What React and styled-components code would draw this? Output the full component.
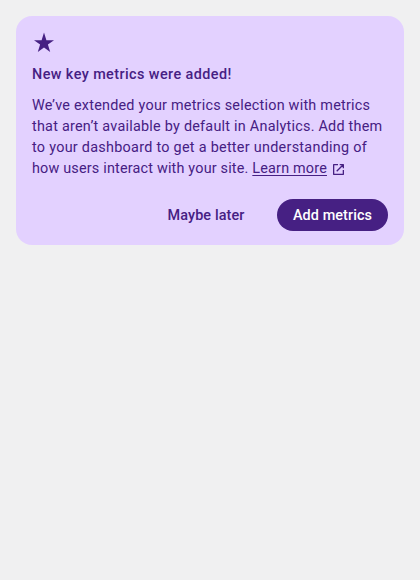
import React from "react";
import styled, { createGlobalStyle } from "styled-components";

const GlobalStyle = createGlobalStyle`
  * { box-sizing: border-box; }
  body {
    margin: 0;
    min-height: 100vh;
    background: #f0f0f1;
    font-family: Roboto, "Liberation Sans", sans-serif;
  }
`;

const Page = styled.main`
  padding: 16px;
`;

const Card = styled.section`
  height: 229px;
  padding: 16px;
  border-radius: 16px;
  background: #e3d1ff;
  color: #462083;
`;

const StarIcon = styled.svg`
  display: block;
  width: 24px;
  height: 22px;
`;

const Title = styled.h3`
  margin: 11px 0 0;
  font-size: 14.4px;
  line-height: 20px;
  font-weight: 500;
  letter-spacing: ${(p) => p.$tracking}px;
`;

const Description = styled.p`
  margin: 10px 0 0;
  font-size: 14.4px;
  line-height: 21px;
`;

const Line = styled.span`
  display: block;
  height: 21px;
  white-space: nowrap;
  letter-spacing: ${(p) => p.$tracking}px;
`;

const Link = styled.a`
  color: inherit;
  text-decoration: underline 1px;
  text-underline-offset: 2px;
`;

const ExternalIcon = styled.svg`
  width: 11px;
  height: 11px;
  margin-left: 6.5px;
  vertical-align: -1.5px;
`;

const Actions = styled.div`
  display: flex;
  justify-content: flex-end;
  gap: 16px;
  margin-top: 20px;
`;

const Button = styled.button`
  height: 32px;
  width: ${(p) => p.$width}px;
  padding: 2px 0 0;
  border: 0;
  border-radius: 16px;
  background: ${(p) => (p.$primary ? "#462083" : "transparent")};
  color: ${(p) => (p.$primary ? "#fff" : "#462083")};
  font: 500 14.4px/30px Roboto, "Liberation Sans", sans-serif;
  letter-spacing: ${(p) => p.$tracking}px;
  white-space: nowrap;
`;

export default function App() {
  return (
    <Page>
      <GlobalStyle />
      <Card>
        <StarIcon viewBox="0 0 24 22" fill="currentColor" aria-hidden="true">
          <path d="M12 0.5 14.4 8.2H22L15.9 12.6 18.2 20 12 15.4 5.8 20 8.1 12.6 2 8.2H9.6Z" />
        </StarIcon>
        <Title $tracking={0.42}>New key metrics were added!</Title>
        <Description>
          <Line $tracking={0.23}>We’ve extended your metrics selection with metrics</Line>
          <Line $tracking={0.24}>that aren’t available by default in Analytics. Add them</Line>
          <Line $tracking={0.275}>to your dashboard to get a better understanding of</Line>
          <Line $tracking={0.185}>
            how users interact with your site. <Link href="#">Learn more</Link>
            <ExternalIcon viewBox="0 0 11 11" fill="none" stroke="currentColor" strokeWidth="1.3" strokeLinejoin="round" aria-hidden="true">
              <path d="M5 .65H.65v9.7h9.7V6M6.7 .65h3.65v3.65M10.2 .8 3.7 7.3" />
            </ExternalIcon>
          </Line>
        </Description>
        <Actions>
          <Button $width={110} $tracking={0.12}>Maybe later</Button>
          <Button $width={111} $tracking={0.1} $primary>Add metrics</Button>
        </Actions>
      </Card>
    </Page>
  );
}
